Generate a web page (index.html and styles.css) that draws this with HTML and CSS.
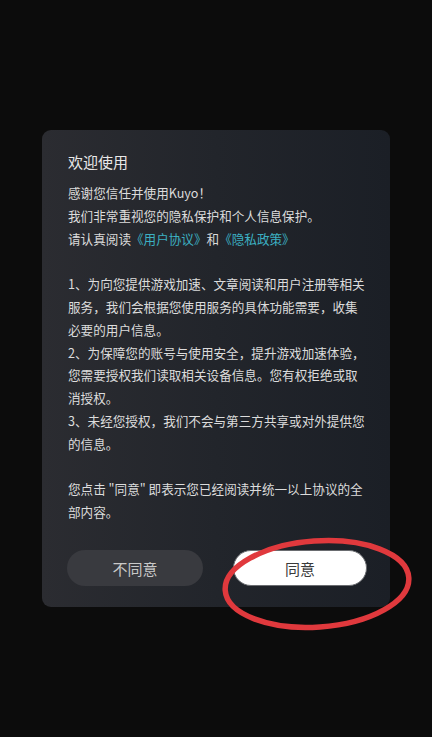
FILE: index.html
```html
<!DOCTYPE html>
<html lang="zh-CN">
<head>
<meta charset="utf-8">
<link rel="stylesheet" href="styles.css">
</head>
<body>
<div class="screen">
  <div class="dialog">
    <h1 class="title">欢迎使用</h1>
    <div class="content">
      <p>感谢您信任并使用Kuyo！</p>
      <p>我们非常重视您的隐私保护和个人信息保护。</p>
      <p>请认真阅读<a class="link">《用户协议》</a>和<a class="link">《隐私政策》</a></p>
      <p class="blank">&nbsp;</p>
      <p>1、为向您提供游戏加速、文章阅读和用户注册等相关服务，我们会根据您使用服务的具体功能需要，收集必要的用户信息。</p>
      <p>2、为保障您的账号与使用安全，提升游戏加速体验，您需要授权我们读取相关设备信息。您有权拒绝或取消授权。</p>
      <p>3、未经您授权，我们不会与第三方共享或对外提供您的信息。</p>
      <p class="blank">&nbsp;</p>
      <p>您点击 "同意" 即表示您已经阅读并统一以上协议的全部内容。</p>
    </div>
    <div class="actions">
      <button class="btn btn-decline">不同意</button>
      <button class="btn btn-accept">同意</button>
    </div>
    <svg class="circle" width="200" height="100" viewBox="0 0 200 100">
      <ellipse cx="100" cy="50" rx="92" ry="43" fill="none" stroke="#e0393d" stroke-width="5.5" transform="rotate(-4 100 50)"/>
    </svg>
  </div>
</div>
</body>
</html>
```
FILE: styles.css
```css
* { box-sizing: border-box; }
html, body {
  margin: 0;
  padding: 0;
  background: #0c0c0c;
  font-family: "Noto Sans CJK SC", "Noto Sans", sans-serif;
}
.screen {
  width: 432px;
  height: 737px;
  padding-top: 130px;
  padding-left: 42px;
}
.dialog {
  position: relative;
  width: 348px;
  height: 477px;
  border-radius: 9px;
  background: linear-gradient(90deg, #2b2c31 0%, #22252b 50%, #1b1f26 100%);
  padding: 21px 20px 21px 26px;
  display: flex;
  flex-direction: column;
}
.title {
  margin: 0;
  font-size: 15px;
  font-weight: 400;
  line-height: 22px;
  color: #e8e8e8;
}
.content {
  margin-top: 9px;
  width: 299px;
  font-size: 12.6px;
  line-height: 22.8px;
  color: #dcdcdc;
}
.content p { margin: 0; }
.link { color: #3cb0c2; text-decoration: none; }
.actions {
  margin-top: auto;
  display: flex;
  gap: 30px;
  margin-left: -1px;
}
.btn {
  width: 136px;
  height: 36px;
  border-radius: 18px;
  font-family: inherit;
  font-size: 15px;
  padding: 0;
}
.btn-decline {
  background: #393a3f;
  border: none;
  color: #c8c8c8;
}
.btn-accept {
  width: 134px;
  background: #ffffff;
  border: 1px solid #6a6c70;
  color: #3a3a3a;
}
.circle {
  position: absolute;
  left: 175px;
  top: 404px;
  overflow: visible;
}
```
